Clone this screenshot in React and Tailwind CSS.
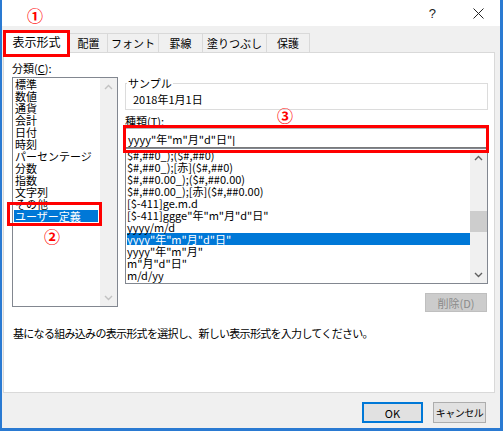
import React from "react";

const categories = [
	"標準",
	"数値",
	"通貨",
	"会計",
	"日付",
	"時刻",
	"パーセンテージ",
	"分数",
	"指数",
	"文字列",
	"その他",
	"ユーザー定義",
];

const formats = [
	"$#,##0_);($#,##0)",
	"$#,##0_);[赤]($#,##0)",
	"$#,##0.00_);($#,##0.00)",
	"$#,##0.00_);[赤]($#,##0.00)",
	"[$-411]ge.m.d",
	'[$-411]ggge"年"m"月"d"日"',
	"yyyy/m/d",
	'yyyy"年"m"月"d"日"',
	'yyyy"年"m"月"',
	'm"月"d"日"',
	"m/d/yy",
];

const tabs = [
	{ label: "配置", w: "w-[38px]" },
	{ label: "フォント", w: "w-[51px]" },
	{ label: "罫線", w: "w-[44px]" },
	{ label: "塗りつぶし", w: "w-[64px]" },
	{ label: "保護", w: "w-[43px]" },
];

function Chevron({ up, color }) {
	return (
		<svg width="9" height="6" viewBox="0 0 9 6">
			<polyline
				points={up ? "1,5 4.5,1.5 8,5" : "1,1 4.5,4.5 8,1"}
				fill="none"
				stroke={color}
				strokeWidth="1.4"
			/>
		</svg>
	);
}

function ScrollBar({ disabled }) {
	const color = disabled ? "#c2c2c2" : "#606060";
	return (
		<div className="w-[17px] h-full bg-[#f0f0f0] flex flex-col shrink-0">
			<div className="h-[17px] flex items-center justify-center">
				<Chevron up color={color} />
			</div>
			<div className="flex-1">
				{!disabled && (
					<div className="mt-[45px] h-[21px] bg-[#cdcdcd]"></div>
				)}
			</div>
			<div className="h-[17px] flex items-center justify-center">
				<Chevron color={color} />
			</div>
		</div>
	);
}

function Marker({ children, className }) {
	return (
		<div
			className={`absolute z-20 w-[20px] h-[20px] flex items-center justify-center text-[16px] leading-none font-bold text-[#ff0000] ${className}`}
		>
			{children}
		</div>
	);
}

export default function App() {
	return (
		<div className="relative w-[503px] h-[431px] overflow-hidden bg-[#f0f0f0] border-l-2 border-r-[3px] border-b-[3px] border-[#2a7ad2] font-['Noto_Sans_CJK_JP',sans-serif] text-[11px] leading-[12px] text-black">
			{/* title bar */}
			<div className="h-[26px] bg-white flex items-center justify-end pr-[16px]">
				<span className="font-['Liberation_Sans',sans-serif] text-[13px] leading-none text-[#222]">
					?
				</span>
				<svg className="ml-[37px]" width="11" height="11" viewBox="0 0 11 11">
					<path d="M0.5 0.5 L10.5 10.5 M10.5 0.5 L0.5 10.5" stroke="#222" strokeWidth="1" />
				</svg>
			</div>

			{/* tabs */}
			<div className="h-[26px] flex items-end pl-[1px]">
				<div className="relative z-10 -mb-[1px] w-[67px] h-[23px] bg-white border-l border-t border-r border-[#d9d9d9] flex items-center justify-center text-[12px]">
					表示形式
				</div>
				{tabs.map((t) => (
					<div
						key={t.label}
						className={`${t.w} h-[19px] border-t border-r border-[#d9d9d9] flex items-center justify-center whitespace-nowrap`}
					>
						{t.label}
					</div>
				))}
			</div>

			{/* panel */}
			<div className="ml-[1px] w-[492px] h-[341px] bg-white border border-[#d9d9d9]">
				<div className="flex pl-[8px]">
					{/* category list */}
					<div className="w-[106px]">
						<div className="h-[24px] pt-[9px]">
							分類(<span className="underline">C</span>):
						</div>
						<div className="h-[230px] border border-[#828790] flex">
							<div className="flex-1">
								{categories.map((c, i) =>
									i === 11 ? (
										<div
											key={c}
											className="ml-[1px] w-[84px] h-[12px] pl-[1px] bg-[#0078d7] text-white whitespace-nowrap"
										>
											{c}
										</div>
									) : (
										<div key={c} className="h-[12px] pl-[2px] whitespace-nowrap">
											{c}
										</div>
									)
								)}
							</div>
							<ScrollBar disabled />
						</div>
					</div>

					{/* right column */}
					<div className="ml-[7px] w-[363px] flex flex-col">
						<div className="relative mt-[30px] h-[27px] border border-[#dcdcdc] pl-[7px] pt-[9px]">
							<span className="absolute -top-[7px] left-[1px] bg-white px-[1px]">
								サンプル
							</span>
							2018年1月1日
						</div>
						<div className="h-[18px] pt-[5px]">
							種類(<span className="underline">T</span>):
						</div>
						<div className="h-[20px] border border-[#b4b4b4] border-b-[#7a7a7a] pl-[2px] pt-[4px] whitespace-nowrap">
							{'yyyy"年"m"月"d"日"'}
							<span className="font-['Liberation_Sans',sans-serif]">|</span>
						</div>
						<div className="h-[136px] border border-[#828790] flex">
							<div className="flex-1 overflow-hidden">
								{formats.map((f, i) =>
									i === 7 ? (
										<div
											key={f}
											className="ml-[1px] h-[12px] bg-[#0078d7] text-white whitespace-nowrap"
										>
											{f}
										</div>
									) : (
										<div key={f} className="h-[12px] pl-[1px] whitespace-nowrap">
											{f}
										</div>
									)
								)}
							</div>
							<ScrollBar />
						</div>
						<div className="self-end mr-[1px] mt-[9px] w-[62px] h-[19px] bg-[#cccccc] border border-[#bfbfbf] text-[#8a8a8a] flex items-center justify-center">
							削除(D)
						</div>
					</div>
				</div>
				<div className="mt-[15px] pl-[9px] tracking-[-0.7px] whitespace-nowrap">
					基になる組み込みの表示形式を選択し、新しい表示形式を入力してください。
				</div>
			</div>

			{/* buttons */}
			<div className="flex justify-end gap-[10px] pt-[9px] pr-[14px]">
				<div className="w-[61px] h-[21px] bg-[#e1e1e1] border-2 border-[#0078d7] flex items-center justify-center">
					OK
				</div>
				<div className="w-[53px] h-[21px] bg-[#e1e1e1] border border-[#adadad] flex items-center justify-center whitespace-nowrap text-[10px] tracking-[-0.5px]">
					キャンセル
				</div>
			</div>

			{/* annotations */}
			<div className="absolute z-20 left-[1px] top-[30px] w-[67px] h-[27px] border-[3px] border-[#ff0000]"></div>
			<div className="absolute z-20 left-[5px] top-[202px] w-[95px] h-[24px] border-[3px] border-[#ff0000]"></div>
			<div className="absolute z-20 left-[121px] top-[125px] w-[366px] h-[28px] border-[3px] border-[#ff0000]"></div>
			<Marker className="left-[23px] top-[5px]">①</Marker>
			<Marker className="left-[40px] top-[226px]">②</Marker>
			<Marker className="left-[273px] top-[105px]">③</Marker>
		</div>
	);
}
